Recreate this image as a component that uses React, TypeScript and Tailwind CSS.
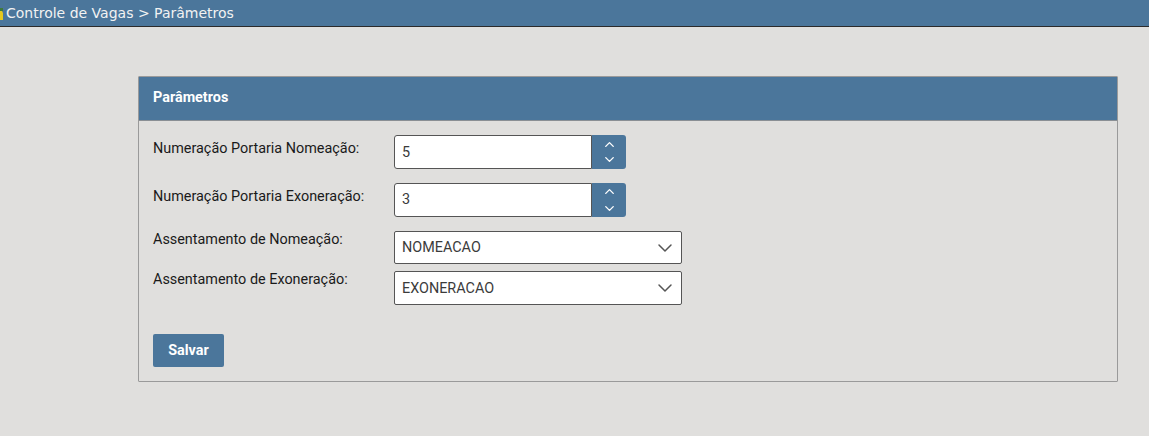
import { ChevronDown, ChevronUp } from 'lucide-react';

function NumberField({ label, value, textPad, spinGap }: { label: string; value: string; textPad: string; spinGap: string }) {
  return (
    <div className="flex items-start h-[34px]">
      <label className="w-[241px] pt-[6px] text-[14.4px] leading-[16px] text-[#1a1a1a]">{label}</label>
      <div className="flex w-[232px] h-[34px]">
        <div className="w-[198px] h-full bg-white border border-[#555555] rounded-l-[3px] pl-[7px] flex items-center text-[14.4px] text-[#3b3b3b]">
          <span className={textPad}>{value}</span>
        </div>
        <div className={`w-[34px] h-full bg-[#4b769b] rounded-r-[3px] flex flex-col items-center justify-center ${spinGap} text-white`}>
          <ChevronUp size={15} strokeWidth={2.2} />
          <ChevronDown size={15} strokeWidth={2.2} />
        </div>
      </div>
    </div>
  );
}

function SelectField({ label, value, height, textPad }: { label: string; value: string; height: string; textPad: string }) {
  return (
    <div className="flex items-start h-[34px]">
      <label className="w-[241px] pt-[1px] text-[14.4px] leading-[16px] text-[#1a1a1a]">{label}</label>
      <div className={`w-[288px] ${height} bg-white border border-[#555555] rounded-[2px] pl-[7px] pr-[4px] flex items-center justify-between text-[14.4px] text-[#3b3b3b]`}>
        <span className={textPad}>{value}</span>
        <ChevronDown size={24} strokeWidth={1.5} className="text-[#555555]" />
      </div>
    </div>
  );
}

export default function App() {
  return (
    <div className="min-h-[436px] bg-[#e0dfdd] font-['Roboto',sans-serif]">
      <div className="flex items-center h-[27px] bg-[#4b769b] border-b border-[#2b2b2b] overflow-hidden">
        <svg width="6" height="26" viewBox="0 0 6 26" className="shrink-0">
          <rect x="0" y="8" width="3" height="3" fill="#3f7a3a" />
          <path d="M0 11h2l1 2v7H0z" fill="#e6c81e" />
        </svg>
        <span className="font-['DejaVu_Sans',sans-serif] text-[14px] text-[#f2f2f2]">Controle de Vagas &gt; Parâmetros</span>
      </div>

      <div className="ml-[138px] mt-[49px] w-[980px] h-[306px] border border-[#9a9a9a] rounded-[1px]">
        <div className="h-[44px] bg-[#4b769b] border-b border-[#8a8f94] flex items-center pl-[14px] pb-[2px] text-[14.4px] font-bold text-white">
          Parâmetros
        </div>
        <div className="pl-[14px] pt-[14px]">
          <NumberField label="Numeração Portaria Nomeação:" value="5" textPad="pt-[1px]" spinGap="gap-0" />
          <div className="mt-[14px]">
            <NumberField label="Numeração Portaria Exoneração:" value="3" textPad="pt-0" spinGap="gap-[2px]" />
          </div>
          <div className="mt-[14px]">
            <SelectField label="Assentamento de Nomeação:" value="NOMEACAO" height="h-[33px]" textPad="pt-0" />
          </div>
          <div className="mt-[6px]">
            <SelectField label="Assentamento de Exoneração:" value="EXONERACAO" height="h-[34px]" textPad="pt-[1px]" />
          </div>
          <button className="mt-[29px] w-[71px] h-[33px] bg-[#4b769b] rounded-[2px] text-[14.4px] font-bold text-white">
            Salvar
          </button>
        </div>
      </div>
    </div>
  );
}
